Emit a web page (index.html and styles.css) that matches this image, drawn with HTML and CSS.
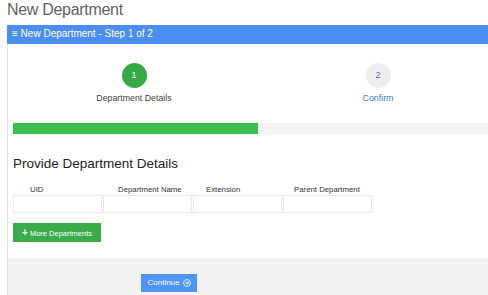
FILE: index.html
```html
<!DOCTYPE html>
<html>
	<head>
		<title>New Department</title>
		<link rel="stylesheet" href="styles.css">
	</head>
	<body>
		<h1 class="page-title">New Department</h1>
		<div class="panel">
			<div class="panel-heading">
				<span class="burger">&#8801;</span> New Department - Step 1 of 2
			</div>
			<div class="panel-body">
				<div class="steps">
					<div class="step">
						<div class="step-circle done">1</div>
						<div class="step-label">Department Details</div>
					</div>
					<div class="step">
						<div class="step-circle">2</div>
						<div class="step-label next">Confirm</div>
					</div>
				</div>
				<div class="progress">
					<div class="progress-fill" style="width: 49.8%"></div>
				</div>

				<h2 class="section-title">Provide Department Details</h2>
				<div class="fields">
					<div class="field">
						<label class="lbl lbl-uid">UID</label>
						<input type="text" class="box">
					</div>
					<div class="field">
						<label class="lbl lbl-name">Department Name</label>
						<input type="text" class="box">
					</div>
					<div class="field">
						<label class="lbl lbl-ext">Extension</label>
						<input type="text" class="box">
					</div>
					<div class="field">
						<label class="lbl lbl-parent">Parent Department</label>
						<input type="text" class="box">
					</div>
				</div>
				<button class="btn-more"><span class="plus">+</span> More Departments</button>
			</div>
			<div class="panel-footer">
				<button class="btn-continue">Continue
					<svg width="8" height="8" viewBox="0 0 10 10">
						<circle cx="5" cy="5" r="4.3" fill="none" stroke="#fff" stroke-width="1.1"/>
						<path d="M2.6 5h4.4M5 3l2 2-2 2" fill="none" stroke="#fff" stroke-width="1.1"/>
					</svg>
				</button>
			</div>
		</div>
	</body>
</html>
```

FILE: styles.css
```css
body {
	margin: 0;
	overflow: hidden;
	font-family: "Liberation Sans", Arial, sans-serif;
	background: #fff;
}

.page-title {
	margin: 0;
	padding: 0 0 0 7px;
	height: 25px;
	font-size: 16px;
	line-height: 19px;
	letter-spacing: -0.3px;
	font-weight: normal;
	color: #626262;
}

.panel {
	margin-left: 7px;
	width: 497px;
	border-left: 1px solid #dbe3f0;
}

.panel-heading {
	height: 19px;
	line-height: 18px;
	background: #4a8ef2;
	color: #fff;
	font-size: 10px;
	padding-left: 5px;
	margin-left: -1px;
}

.burger {
	font-size: 10px;
}

.panel-body {
	padding: 0 0 17px 5px;
}

.steps {
	display: flex;
	padding-top: 19px;
	margin-left: -1px;
}

.step {
	width: 244px;
	display: flex;
	flex-direction: column;
	align-items: center;
}

.step-circle {
	width: 25px;
	height: 25px;
	border-radius: 50%;
	background: #eeeeee;
	color: #4d7eae;
	font-size: 9px;
	line-height: 25px;
	text-align: center;
}

.step-circle.done {
	background: #37a846;
	color: #fff;
}

.step-label {
	margin-top: 5px;
	font-size: 8.8px;
	color: #444;
}

.step-label.next {
	color: #3b7ab8;
}

.progress {
	margin-top: 20px;
	height: 11px;
	background: #f3f3f3;
}

.progress-fill {
	height: 11px;
	background: #3dbd50;
}

.section-title {
	margin: 21px 0 0 0;
	font-size: 13.5px;
	line-height: 17px;
	font-weight: normal;
	color: #222;
}

.fields {
	display: flex;
	gap: 1px;
	margin-top: 12px;
}

.field {
	display: flex;
	flex-direction: column;
	width: 89px;
}

.lbl {
	font-size: 7.8px;
	line-height: 11px;
	color: #333;
	height: 11px;
}

.lbl-uid { padding-left: 17px; }
.lbl-name { padding-left: 15px; }
.lbl-ext { padding-left: 13px; }
.lbl-parent { padding-left: 11px; }

.box {
	box-sizing: border-box;
	width: 89px;
	height: 18px;
	margin: 0;
	border: 1px solid #e8e8e8;
	background: #fff;
}

.btn-more {
	margin-top: 10px;
	width: 88px;
	height: 19px;
	padding: 0;
	border: none;
	background: #3aac4a;
	color: #fff;
	font-family: "Liberation Sans", Arial, sans-serif;
	font-size: 7.5px;
}

.plus {
	font-weight: bold;
	font-size: 10px;
}

.panel-footer {
	height: 40px;
	background: #f3f3f3;
	border-top: 1px solid #e6e6e6;
	padding-top: 11px;
	box-sizing: border-box;
}

.btn-continue {
	margin-left: 133px;
	width: 56px;
	height: 18px;
	padding: 0;
	border: none;
	background: #4d94fc;
	color: #fff;
	font-family: "Liberation Sans", Arial, sans-serif;
	font-size: 8px;
	display: inline-flex;
	align-items: center;
	justify-content: center;
	gap: 3px;
}
```
